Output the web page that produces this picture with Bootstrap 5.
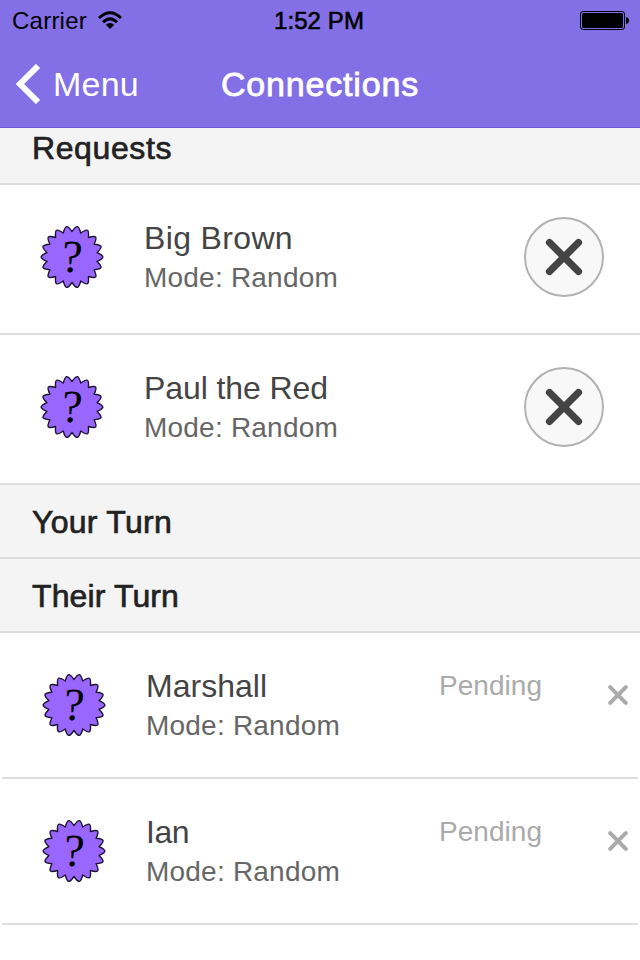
<!DOCTYPE html>
<html lang="en">
<head>
<meta charset="utf-8">
<meta name="viewport" content="width=device-width, initial-scale=1">
<title>Connections</title>
<link href="https://cdn.jsdelivr.net/npm/bootstrap@5.3.0/dist/css/bootstrap.min.css" rel="stylesheet">
<style>
  body { font-family: "Liberation Sans", Arial, sans-serif; width: 640px; height: 960px; overflow: hidden; background: #fff; }
  svg { display: block; flex: none; }
  .app-top { height: 128px; background: #836fe6; border-bottom: 1px solid #6c58d4; }
  .status { height: 40px; padding: 0 11px 0 12px; font-size: 24px; line-height: 42px; color: #000; }
  .status > div, .title-bar > div { flex: 1 1 0; }
  .status .fit { padding-top: 1px; }
  .status .clock { -webkit-text-stroke: .6px #000; margin-right: 3px; }
  .wifi { margin-left: 10px; }
  .title-bar { height: 88px; padding: 0 16px; font-size: 34px; line-height: 88px; color: #fff; }
  .title-bar .screen-title { -webkit-text-stroke: .8px #fff; }
  .back-label { margin-left: 12px; }
  .fit { display: inline-block; white-space: nowrap; }
  .section-head { height: 74px; padding-left: 32px; background: #f4f4f4; border-bottom: 2px solid #ddd; color: #222; font-size: 32px; line-height: 74px; -webkit-text-stroke: .7px #222; }
  .section-head.cut { height: 57px; line-height: 41px; }
  .request { height: 150px; padding: 0 36px 4px 40px; border-bottom: 2px solid #ddd; }
  .turn { height: 146px; margin: 0 2px; padding: 0 10px 0 40px; border-bottom: 2px solid #ddd; }
  .seal path { fill: #96f; stroke: #1c1430; stroke-width: 1.4; stroke-linejoin: round; }
  .seal text { font: 46px "Liberation Serif", serif; fill: #000; }
  .who { margin: 2px 0 0 40px; width: 260px; }
  .who-name { font-size: 32px; line-height: 40px; color: #444; }
  .who-mode { font-size: 28px; line-height: 40px; color: #666; }
  .pending { margin: 34px 0 0 33px; font-size: 28px; line-height: 38px; color: #aaa; }
  .reject { width: 80px; height: 80px; border: 2px solid #b2b2b2; background: #f8f8f8; }
  .small-x { margin-bottom: 20px; }
</style>
<script src="https://cdn.jsdelivr.net/npm/bootstrap@5.3.0/dist/js/bootstrap.bundle.min.js"></script>
</head>
<body>
<header class="app-top">
  <div class="status d-flex align-items-center">
    <div class="d-flex align-items-center"><span class="fit" data-w="75">Carrier</span>
      <svg class="wifi" width="26" height="20" viewBox="0 0 26 20" fill="none" stroke="#000" stroke-width="2.900"><path d="M2 8Q13-2.500 24 8M6 12.200Q13 5.500 20 12.200"/><path d="M8.800 14.800Q13 11 17.200 14.800L13 19z" fill="#000" stroke="none"/></svg>
    </div>
    <span class="clock fit" data-w="90">1:52 PM</span>
    <div class="d-flex justify-content-end">
      <svg width="49" height="20" viewBox="0 0 49 20"><rect x=".5" y="1.500" width="44" height="18" rx="2.500" fill="none" stroke="#000"/><rect x="2" y="3" width="41" height="15" rx="1.500"/><path d="M46 7q3 .5 3 3.500t-3 3.500z"/></svg>
    </div>
  </div>
  <div class="title-bar d-flex align-items-center">
    <div class="d-flex align-items-center">
      <svg width="25" height="40" viewBox="0 0 25 40" fill="none" stroke="#fff" stroke-width="6"><path d="M22 2 4 20 22 38"/></svg>
      <span class="fit back-label" data-w="86">Menu</span>
    </div>
    <span class="screen-title fit" data-w="198">Connections</span>
    <div></div>
  </div>
</header>

<main>
  <h2 class="section-head cut m-0"><span class="fit" data-w="140">Requests</span></h2>
  <section class="request d-flex align-items-center">
    <svg class="seal" width="64" height="64" viewBox="0 0 64 64"><path/><text x="22" y="47" transform="translate(2) skewX(-4)">?</text></svg>
    <div class="who"><div class="who-name"><span class="fit" data-w="149">Big Brown</span></div><div class="who-mode"><span class="fit" data-w="194">Mode: Random</span></div></div>
    <button class="reject btn rounded-circle p-0 ms-auto d-flex align-items-center justify-content-center" aria-label="Reject"><svg width="38" height="38" viewBox="0 0 38 38" stroke="#444" stroke-width="7.200" stroke-linecap="round"><path d="M4.500 4.500 33.500 33.500M33.500 4.500 4.500 33.500"/></svg></button>
  </section>
  <section class="request d-flex align-items-center">
    <svg class="seal" width="64" height="64" viewBox="0 0 64 64"><path/><text x="22" y="47" transform="translate(2) skewX(-4)">?</text></svg>
    <div class="who"><div class="who-name"><span class="fit" data-w="184">Paul the Red</span></div><div class="who-mode"><span class="fit" data-w="194">Mode: Random</span></div></div>
    <button class="reject btn rounded-circle p-0 ms-auto d-flex align-items-center justify-content-center" aria-label="Reject"><svg width="38" height="38" viewBox="0 0 38 38" stroke="#444" stroke-width="7.200" stroke-linecap="round"><path d="M4.500 4.500 33.500 33.500M33.500 4.500 4.500 33.500"/></svg></button>
  </section>
  <h2 class="section-head m-0"><span class="fit" data-w="140">Your Turn</span></h2>
  <h2 class="section-head m-0"><span class="fit" data-w="147">Their Turn</span></h2>
  <section class="turn d-flex align-items-center">
    <svg class="seal" width="64" height="64" viewBox="0 0 64 64"><path/><text x="22" y="47" transform="translate(2) skewX(-4)">?</text></svg>
    <div class="who"><div class="who-name"><span class="fit" data-w="121">Marshall</span></div><div class="who-mode"><span class="fit" data-w="194">Mode: Random</span></div></div>
    <div class="pending align-self-start"><span class="fit" data-w="103">Pending</span></div>
    <svg class="small-x ms-auto" width="20" height="20" viewBox="0 0 20 20" stroke="#aaa" stroke-width="4" stroke-linecap="round"><path d="M2.200 2.200 17.800 17.800M17.800 2.200 2.200 17.800"/></svg>
  </section>
  <section class="turn d-flex align-items-center">
    <svg class="seal" width="64" height="64" viewBox="0 0 64 64"><path/><text x="22" y="47" transform="translate(2) skewX(-4)">?</text></svg>
    <div class="who"><div class="who-name"><span class="fit" data-w="43">Ian</span></div><div class="who-mode"><span class="fit" data-w="194">Mode: Random</span></div></div>
    <div class="pending align-self-start"><span class="fit" data-w="103">Pending</span></div>
    <svg class="small-x ms-auto" width="20" height="20" viewBox="0 0 20 20" stroke="#aaa" stroke-width="4" stroke-linecap="round"><path d="M2.200 2.200 17.800 17.800M17.800 2.200 2.200 17.800"/></svg>
  </section>
</main>
<script>
  // Scalloped seal outline: narrow rounded teeth with sharp valleys.
  const teeth = 18, pt = (r, a) => (32 + r * Math.sin(a)).toFixed(2) + ' ' + (32 - r * Math.cos(a)).toFixed(2);
  const step = 2 * Math.PI / teeth;
  let d = 'M' + pt(25.5, 0);
  for (let i = 0; i < teeth; i++) {
    const a = i * step;
    d += 'C' + pt(32.8, a + step * .42) + ' ' + pt(32.8, a + step * .58) + ' ' + pt(25.5, a + step);
  }
  document.querySelectorAll('.seal path').forEach(p => p.setAttribute('d', d + 'Z'));
  // Even tracking so each label fills its intended width.
  document.querySelectorAll('.fit').forEach(e => {
    const extra = (e.dataset.w - e.getBoundingClientRect().width) / e.textContent.length;
    e.style.letterSpacing = extra + 'px';
  });
</script>
</body>
</html>
